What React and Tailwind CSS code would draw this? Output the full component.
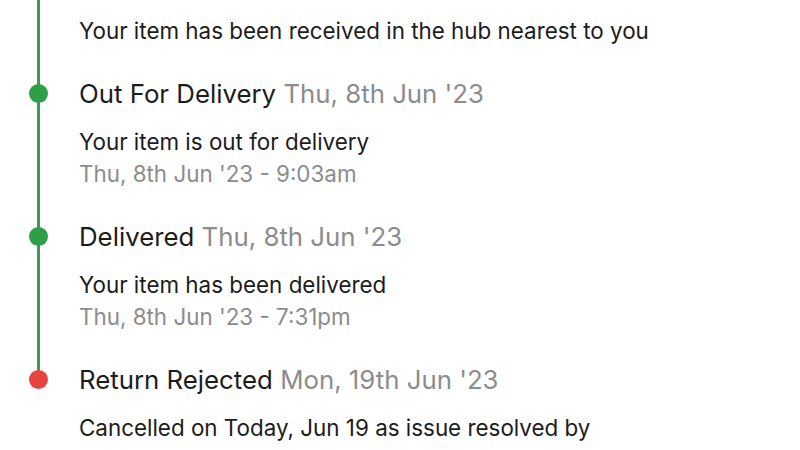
import React from "react";

const events = [
  {
    title: null,
    body: "Your item has been received in the hub nearest to you",
    time: null,
  },
  {
    title: "Out For Delivery",
    date: "Thu, 8th Jun '23",
    body: "Your item is out for delivery",
    time: "Thu, 8th Jun '23 - 9:03am",
    color: "bg-[#2f9e48]",
  },
  {
    title: "Delivered",
    date: "Thu, 8th Jun '23",
    body: "Your item has been delivered",
    time: "Thu, 8th Jun '23 - 7:31pm",
    color: "bg-[#2f9e48]",
  },
  {
    title: "Return Rejected",
    date: "Mon, 19th Jun '23",
    body: "Cancelled on Today, Jun 19 as issue resolved by",
    time: null,
    color: "bg-[#e8443f]",
  },
];

function Event({ ev }) {
  return (
    <div className="relative pb-[31px]">
      {ev.title && (
        <div className="relative text-[25.8px] leading-[32px] text-[#1c1c1c]">
          <span
            className={`absolute -left-[50px] top-[6px] w-[19px] h-[19px] rounded-full ${ev.color}`}
          />
          {ev.title} <span className="text-[#8c8c8c]">{ev.date}</span>
        </div>
      )}
      <div className={ev.title ? "mt-[16px]" : ""}>
        <p className="text-[22.4px] leading-[32px] text-[#1c1c1c]">{ev.body}</p>
        {ev.time && (
          <p className="text-[22.4px] leading-[32px] text-[#8c8c8c]">{ev.time}</p>
        )}
      </div>
    </div>
  );
}

export default function App() {
  return (
    <div
      className="w-[800px] h-[450px] overflow-hidden bg-white"
      style={{ fontFamily: "Inter, 'Noto Sans', sans-serif" }}
    >
      <div className="relative pl-[79px] pt-[15px]">
        <div className="absolute left-[37px] top-0 w-[3px] h-[388px] bg-[#3e9a56]" />
        {events.map((ev, i) => (
          <Event key={i} ev={ev} />
        ))}
      </div>
    </div>
  );
}
